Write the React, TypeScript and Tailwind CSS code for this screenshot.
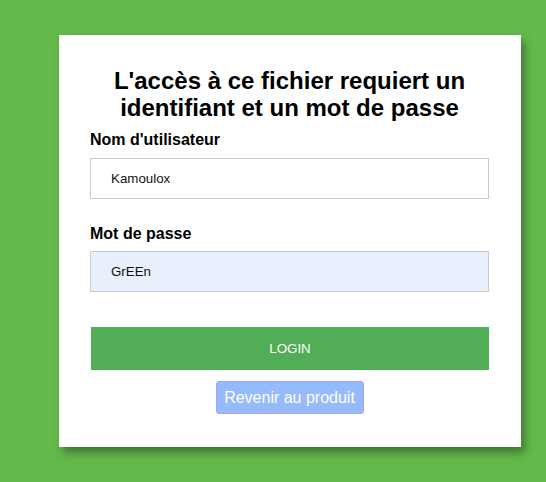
import React from "react";

export default function App() {
  return (
    <div className="min-h-[482px] w-[546px] bg-[#64b94a] pt-[35px] pl-[59px] font-['Liberation_Sans',Arial,sans-serif]">
      <div className="w-[462px] bg-white pt-[32px] pb-[33px] pl-[31px] pr-[32px] shadow-[4px_6px_8px_rgba(0,0,0,0.35)] flex flex-col">
        <h1 className="text-center text-[24px] leading-[27px] font-bold text-black">
          L'accès à ce fichier requiert un identifiant et un mot de passe
        </h1>
        <label className="mt-[10px] text-[16px] leading-[18px] font-bold text-black">Nom d'utilisateur</label>
        <div className="mt-[9px] h-[41px] border border-[#cbcbcb] bg-white flex items-center pl-[20px] text-[13.333px] text-[#111]">
          Kamoulox
        </div>
        <label className="mt-[26px] text-[16px] leading-[18px] font-bold text-black">Mot de passe</label>
        <div className="mt-[8px] h-[41px] border border-[#cbcbcb] bg-[#e8f0fe] flex items-center pl-[20px] text-[13.333px] text-[#111]">
          GrEEn
        </div>
        <button className="mt-[35px] ml-[1px] h-[43px] bg-[#51ad56] text-white text-[13.333px] flex items-center justify-center">
          LOGIN
        </button>
        <div className="mt-[11px] flex justify-center">
          <button className="h-[33px] w-[148px] rounded-[3px] border border-[#a8a0f4] bg-[#96bbfc] text-white text-[16px] flex items-center justify-center">
            Revenir au produit
          </button>
        </div>
      </div>
    </div>
  );
}
